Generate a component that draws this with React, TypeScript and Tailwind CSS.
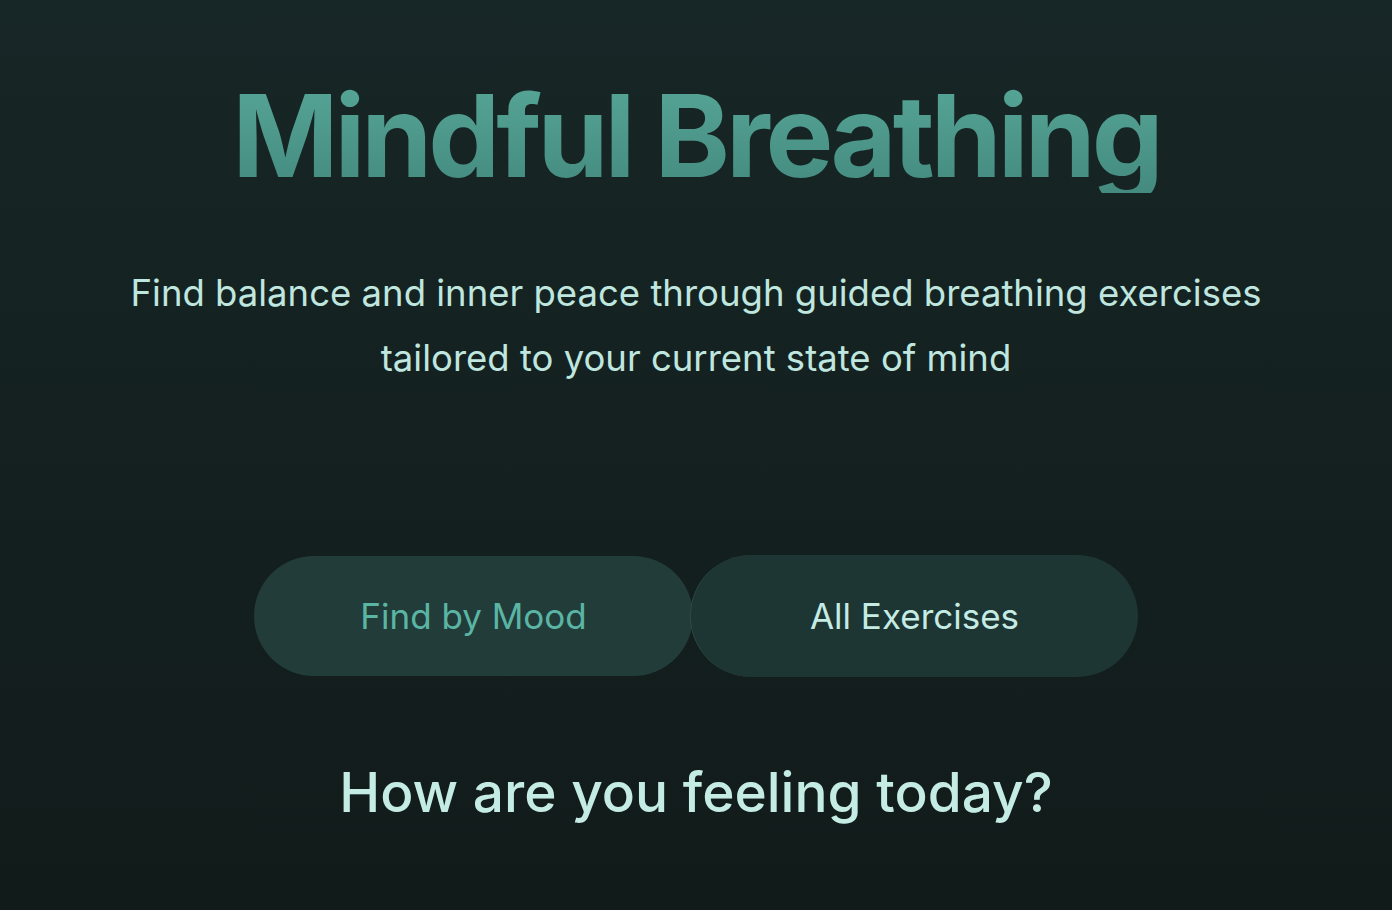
import React from 'react';

const App = () => {
  return (
    <div
      className="min-h-[910px] w-full bg-gradient-to-b from-[#172626] to-[#111b1a] flex flex-col items-center"
      style={{ fontFamily: 'Inter, "Noto Sans", sans-serif' }}
    >
      <h1 className="mt-[79px] text-[114px] leading-none font-bold tracking-[-0.035em] bg-gradient-to-b from-[#56a697] to-[#448a7f] bg-clip-text text-transparent">
        Mindful Breathing
      </h1>

      <p className="mt-[68px] text-[36.5px] leading-[65px] text-[#bfe6df] text-center max-w-[1180px]">
        Find balance and inner peace through guided breathing exercises tailored to your current state of mind
      </p>

      <div className="mt-[164px] flex items-center">
        <button className="w-[439px] h-[120px] rounded-full bg-[#223d39] text-[#5bb5a5] text-[35px]">
          Find by Mood
        </button>
        <button className="-ml-[3px] w-[448px] h-[122px] rounded-full bg-[#1d3533] text-[#c5ece4] text-[35px] border-l border-[#2d4a46]">
          All Exercises
        </button>
      </div>

      <h2 className="mt-[88px] text-[55px] leading-none font-medium text-[#c5ece4]">
        How are you feeling today?
      </h2>
    </div>
  );
};

export default App;
